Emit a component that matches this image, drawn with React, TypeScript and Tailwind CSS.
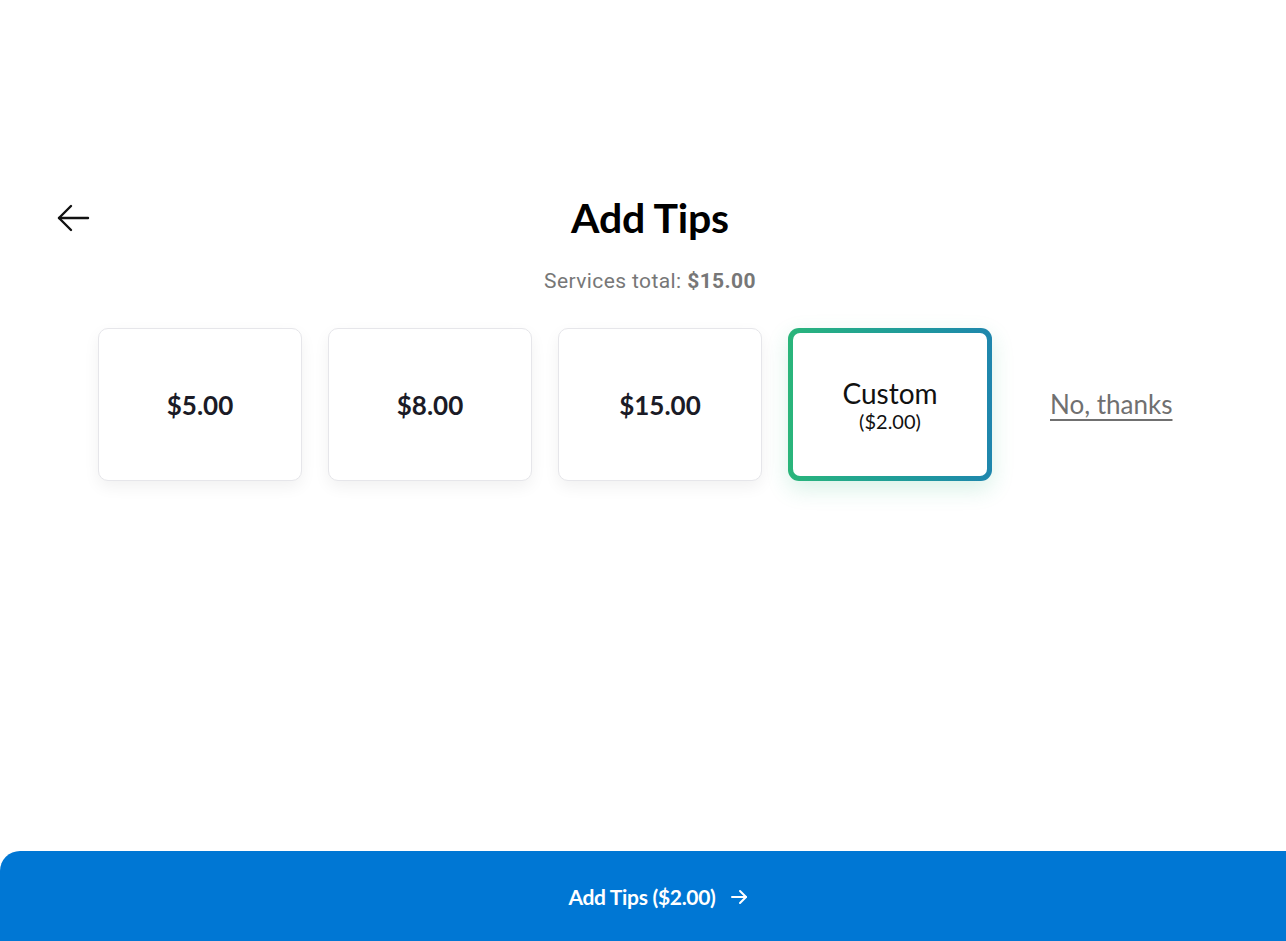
import React from "react";

export default function App() {
  const lato = { fontFamily: "Lato, 'Noto Sans', sans-serif" };
  return (
    <div className="w-[1286px] h-[941px] bg-white flex flex-col relative overflow-hidden" style={lato}>
      <div className="h-[194px]" />
      <div className="relative flex justify-center items-center h-[50px] pl-[14px]">
        <button className="absolute left-[55px] top-[6px] w-[36px] h-[36px] flex items-center justify-center">
          <svg width="34" height="30" viewBox="0 0 34 30" fill="none" stroke="#111" strokeWidth="2.4" strokeLinecap="round" strokeLinejoin="round">
            <path d="M32 15H3" />
            <path d="M15 3L3 15l12 12" />
          </svg>
        </button>
        <h1 className="text-[41px] font-bold text-black leading-none tracking-[-0.2px] mt-[-4px]">Add Tips</h1>
      </div>
      <div className="mt-[23px] flex justify-center pl-[14px]">
        <p className="text-[21px] leading-[28px] text-[#777] tracking-[0.4px]" style={{ fontFamily: "Roboto, 'Noto Sans', sans-serif" }}>
          Services total: <span className="font-bold">$15.00</span>
        </p>
      </div>
      <div className="mt-[33px] flex items-center pl-[98px]">
        <div className="flex gap-[26px]">
          {["$5.00", "$8.00", "$15.00"].map((v) => (
            <div
              key={v}
              className="w-[204px] h-[153px] rounded-[10px] border border-[#e6e6ea] bg-white shadow-[0_6px_16px_rgba(0,0,0,0.06)] flex items-center justify-center"
            >
              <span className="text-[26px] font-bold text-[#1b1b26] mt-[2px]">{v}</span>
            </div>
          ))}
          <div className="w-[204px] h-[153px] rounded-[11px] p-[5px] bg-gradient-to-r from-[#2ab57a] to-[#1f86ad] shadow-[0_8px_22px_rgba(40,180,120,0.18)]">
            <div className="w-full h-full rounded-[7px] bg-white flex flex-col items-center justify-center">
              <span className="text-[28px] text-[#111] leading-[34px] mt-[-2px]">Custom</span>
              <span className="text-[20px] text-[#111] leading-[22px]">($2.00)</span>
            </div>
          </div>
        </div>
        <div className="ml-[58px]">
          <span className="text-[26px] text-[#707070] underline underline-offset-[5px] decoration-[1.5px]">No, thanks</span>
        </div>
      </div>
      <div className="flex-1" />
      <div className="h-[90px] bg-[#0077d4] rounded-tl-[20px] rounded-tr-[20px] mr-[-20px] flex items-center justify-center pr-[20px]">
        <div className="flex items-center gap-[14px] ml-[30px] mt-[2px]">
          <span className="text-white text-[21px] font-bold tracking-[-0.3px]">Add Tips ($2.00)</span>
          <svg width="18" height="16" viewBox="0 0 18 16" fill="none" stroke="white" strokeWidth="2" strokeLinecap="round" strokeLinejoin="round">
            <path d="M2 8h14" />
            <path d="M10 2l6 6-6 6" />
          </svg>
        </div>
      </div>
    </div>
  );
}
